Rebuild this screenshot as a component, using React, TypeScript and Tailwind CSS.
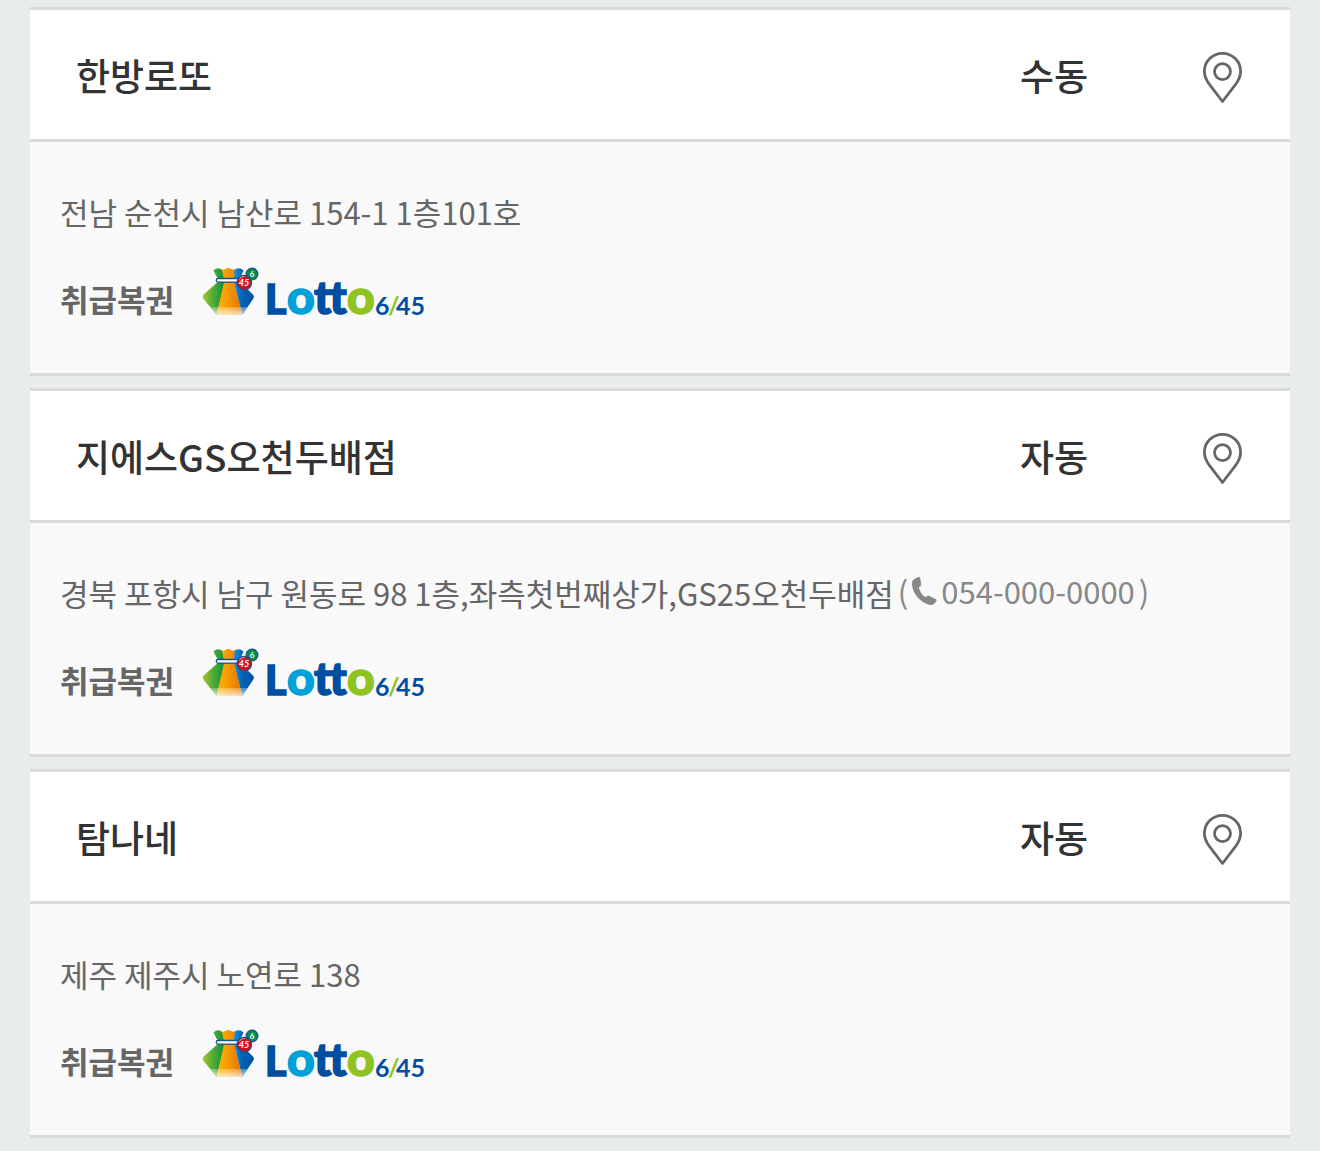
const stores = [
  { name: '한방로또', type: '수동', address: '전남 순천시 남산로 154-1 1층101호', phone: '' },
  { name: '지에스GS오천두배점', type: '자동', address: '경북 포항시 남구 원동로 98 1층,좌측첫번째상가,GS25오천두배점', phone: '054-000-0000' },
  { name: '탐나네', type: '자동', address: '제주 제주시 노연로 138', phone: '' }
];

function PinIcon() {
  return (
    <svg width="41" height="53" viewBox="0 0 41 53" fill="none" stroke="#666" strokeWidth="2.8" aria-hidden="true">
      <path d="M20.5 50.5L7.6 33.6C4.4 29.3 2.4 25.6 2.4 20.4a18.1 18.1 0 0 1 36.2 0c0 5.2-2 8.9-5.2 13.2z" strokeLinejoin="round" />
      <circle cx="20.5" cy="20.6" r="8" />
    </svg>
  );
}

function PhoneIcon() {
  return (
    <svg width="25" height="28" viewBox="0 0 25 28" fill="#888" aria-hidden="true">
      <path d="M.2 4.6C.7 3 4.5.6 6.6.1c1-.1 1.4.5 1.6 1.4l1 5.3c.2 1.300-.1 1.900-1 2.500L6.700 10.400c1.200 4 3.400 7.300 6.500 9.700l2.200-1.100c.8-.4 1.400-.3 2.100.1l6.300 3.200c.9.500 1 1.100.5 1.900-1 1.700-2.600 3.500-5 3.700C11 28-1.500 16.500.2 4.600z" />
    </svg>
  );
}

function LottoLogo({ id }: { id: string }) {
  return (
    <svg width="224" height="50" viewBox="0 0 224 50" role="img" aria-label="Lotto 6/45" className="overflow-visible font-['Lato',sans-serif]">
      <defs>
        <linearGradient id={`${id}-green`} x1="0" y1="0" x2="1" y2="0">
          <stop offset="0" stopColor="#a5c92c" />
          <stop offset=".45" stopColor="#55ac38" />
          <stop offset="1" stopColor="#0b8f3c" />
        </linearGradient>
        <linearGradient id={`${id}-orange`} x1="0" y1="0" x2="1" y2="0">
          <stop offset="0" stopColor="#fbb800" />
          <stop offset=".55" stopColor="#f49200" />
          <stop offset="1" stopColor="#e66d00" />
        </linearGradient>
        <linearGradient id={`${id}-blue`} x1="0" y1="0" x2="1" y2="0">
          <stop offset="0" stopColor="#1a9be0" />
          <stop offset=".4" stopColor="#0065b8" />
          <stop offset="1" stopColor="#004ea2" />
        </linearGradient>
        <linearGradient id={`${id}-fade`} x1="0" y1="0" x2="0" y2="1">
          <stop offset="0" stopColor="#fff" stopOpacity=".25" />
          <stop offset="1" stopColor="#fff" stopOpacity=".75" />
        </linearGradient>
      </defs>
      {/* 복주머니 */}
      <path d="M11.500 4.500Q15.500.5 20.500 4L23 15 14.700 49 1.600 33Q0 30.700 1.300 28.700L17.500 14.500Q14 10.500 11.500 4.500z" fill={`url(#${id}-green)`} />
      <path d="M31.500 4Q37 .5 41.500 4.500 39 10.500 36.500 14.500L51.200 28.700Q52.800 30.700 51 33L40.300 49 31.500 15z" fill={`url(#${id}-blue)`} />
      <path d="M20 4Q23 3.500 26.300 1.800 29.500 3.500 32.700 4L31.700 15 40.300 49H14.700L22.300 15z" fill={`url(#${id}-orange)`} />
      <path d="M8.300 41H45.700L40.300 49H14.700z" fill={`url(#${id}-fade)`} />
      <rect x="14.300" y="12.500" width="27" height="3.600" rx="1.500" fill="#fff" stroke="#15558f" strokeWidth="1.300" />
      <circle cx="50" cy="8" r="5.800" fill="#008f45" stroke="#1b4f88" strokeWidth="1.300" />
      <circle cx="42.300" cy="16.700" r="7.200" fill="#dc0d1a" stroke="#1b4f88" strokeWidth="1.300" />
      <path d="M36.500 14.500a6.500 6.500 0 0 1 7-4.300Q39 11 36.500 14.500z" fill="#f68a88" />
      <text x="50" y="11" textAnchor="middle" fontWeight="700" fontSize="8" fill="#fff">6</text>
      <text x="42" y="20" textAnchor="middle" fontWeight="700" fontSize="9" fontStyle="italic" fill="#fff">45</text>
      {/* 로고 문자 */}
      <g fontWeight="900" fill="#004ea2" stroke="#004ea2" strokeWidth="1.500">
        <text x="63" y="48" fontSize="41">L</text>
        <text x="85" y="48" fontSize="48" fill="#00a0d8" stroke="#00a0d8">o</text>
        <text x="112" y="48" fontSize="46">tt</text>
        <text x="145" y="48" fontSize="48" fill="#8fc31f" stroke="#8fc31f">o</text>
      </g>
      <g fontWeight="700" fontSize="25" fill="#004ea2">
        <text x="173" y="49">6</text>
        <text x="186" y="49" fill="#8fc31f">/</text>
        <text x="194" y="49">45</text>
      </g>
    </svg>
  );
}

export default function App() {
  return (
    <main className="min-h-screen bg-[#e8eced] px-[30px] pt-[7px] pb-3 font-['Noto_Sans_CJK_KR',sans-serif]">
      <ul className="flex flex-col gap-3">
        {stores.map((store, index) => (
          <li key={store.name} className="border-y-3 border-[#dadada] bg-[#f9f9f9]">
            {/* 판매점 이름 / 구분 / 위치 */}
            <div className="flex items-center border-b-3 border-[#dadada] bg-white pt-[37px] pb-[35px] text-[37px] leading-[57px] font-medium text-[#333]">
              <h2 className="flex-1 pl-[46px]">{store.name}</h2>
              <span className="w-[200px] text-center">{store.type}</span>
              <div className="flex w-[136px] justify-center pt-1">
                <button type="button" aria-label={`${store.name} 위치 보기`} className="cursor-pointer">
                  <PinIcon />
                </button>
              </div>
            </div>

            {/* 주소 및 취급복권 */}
            <div className="px-[30px] pt-[46px] pb-[50px] text-[31px] leading-[48px] text-[#666]">
              <div className="flex">
                <p>{store.address}</p>
                {store.phone && (
                  <p className="-mt-1 flex items-center gap-1 pl-1 text-[#888]">
                    (
                    <a href={`tel:${store.phone}`} className="flex items-center gap-1">
                      <PhoneIcon />
                      {store.phone}
                    </a>
                    )
                  </p>
                )}
              </div>
              <div className="mt-[30px] flex items-end gap-7">
                <strong className="font-bold">취급복권</strong>
                <div className="mb-[7px]">
                  <LottoLogo id={`lotto-${index}`} />
                </div>
              </div>
            </div>
          </li>
        ))}
      </ul>
    </main>
  );
}
